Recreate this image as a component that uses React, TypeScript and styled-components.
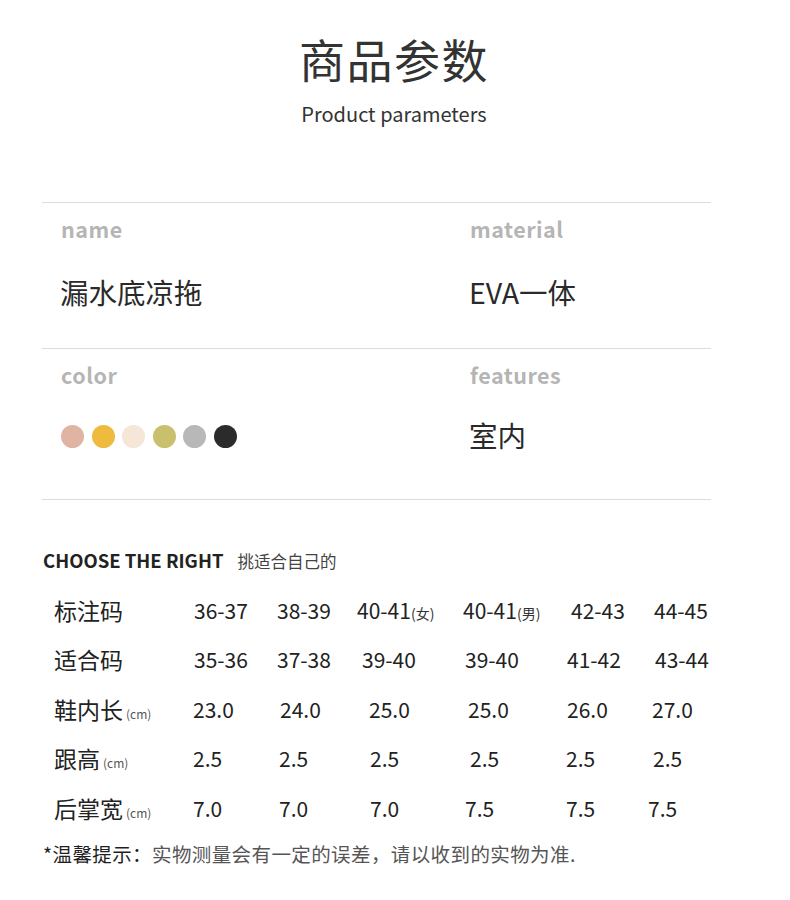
import React from "react";
import styled, { createGlobalStyle } from "styled-components";

const GlobalStyle = createGlobalStyle`
  body {
    margin: 0;
    background: #ffffff;
    font-family: "Noto Sans CJK SC", "Noto Sans", sans-serif;
  }
`;

const Page = styled.div`
  width: 790px;
  height: 900px;
  background: #fff;
  overflow: hidden;
`;

const Header = styled.header`
  display: flex;
  flex-direction: column;
  align-items: center;
  padding-top: 30px;
  margin-left: -2px;
`;

const Title = styled.h1`
  margin: 0;
  font-size: 46px;
  line-height: 56px;
  font-weight: 400;
  letter-spacing: 1.5px;
  color: #333;
`;

const Subtitle = styled.div`
  margin-top: 14px;
  font-size: 20px;
  line-height: 28px;
  color: #333;
`;

const Params = styled.section`
  margin: 74px 0 0 42px;
  width: 669px;
  border-top: 1px solid #dcdcdc;
`;

const ParamRow = styled.div<{ $h: number }>`
  display: grid;
  grid-template-columns: 428px 1fr;
  height: ${(p) => p.$h}px;
  box-sizing: border-box;
  border-bottom: 1px solid #dcdcdc;
`;

const ParamCell = styled.div<{ $left?: boolean }>`
  display: flex;
  flex-direction: column;
  padding: 12px 0 0 ${(p) => (p.$left ? 19 : 0)}px;
`;

const ParamLabel = styled.div`
  font-size: 21.5px;
  line-height: 28px;
  font-weight: 700;
  color: #b5b5b5;
  letter-spacing: 0.5px;
`;

const ParamValue = styled.div<{ $dy?: number }>`
  margin-top: ${(p) => 30 + (p.$dy ?? 0)}px;
  height: 36px;
  display: flex;
  align-items: center;
  font-size: 28.5px;
  color: #2a2a2a;
  margin-left: -1px;
`;

const Swatches = styled.div`
  display: flex;
  gap: 7.5px;
  margin-left: 1px;
  margin-top: -2px;
`;

const Swatch = styled.span<{ $c: string }>`
  width: 23px;
  height: 23px;
  border-radius: 50%;
  background: ${(p) => p.$c};
`;

const ChooseHead = styled.div`
  margin: 48px 0 0 43px;
  display: flex;
  align-items: baseline;
  gap: 14px;
  line-height: 24px;
`;

const ChooseTitle = styled.span`
  font-size: 18.5px;
  font-weight: 700;
  color: #222;
`;

const ChooseSub = styled.span`
  font-size: 16.5px;
  color: #444;
`;

const SizeTable = styled.div`
  margin: 12px 0 0 54px;
  display: grid;
  grid-template-columns: 139px 85px 87px 101px 101px 85px 1fr;
  grid-auto-rows: 49.5px;
  align-items: center;
`;

const RowLabel = styled.div`
  font-size: 23px;
  color: #222;
  white-space: nowrap;
`;

const Unit = styled.small`
  font-size: 12px;
  color: #555;
  margin-left: 3px;
`;

const Cell = styled.div<{ $dx: number }>`
  font-size: 21px;
  color: #222;
  white-space: nowrap;
  transform: translateX(${(p) => p.$dx}px);
`;

const Gender = styled.small`
  font-size: 14px;
  color: #333;
`;

const Note = styled.p`
  margin: 8px 0 0 43px;
  font-size: 19.5px;
  line-height: 26px;
  letter-spacing: 0.4px;
  color: #555;
`;

const NoteLead = styled.span`
  color: #1f1f1f;
  font-weight: 400;
`;

const swatchColors = ["#e0b4a2", "#efbb3e", "#f5e6d8", "#c9c06e", "#b9b8b9", "#2b2b2b"];

type SizeRow = {
  label: string;
  unit?: boolean;
  cells: React.ReactNode[];
  dx: number[];
};

const rows: SizeRow[] = [
  {
    label: "标注码",
    cells: [
      "36-37",
      "38-39",
      <>40-41<Gender>(女)</Gender></>,
      <>40-41<Gender>(男)</Gender></>,
      "42-43",
      "44-45",
    ],
    dx: [1, -1, -8, -3, 4, 2],
  },
  {
    label: "适合码",
    cells: ["35-36", "37-38", "39-40", "39-40", "41-42", "43-44"],
    dx: [1, -1, -3, -1, 0, 3],
  },
  {
    label: "鞋内长",
    unit: true,
    cells: ["23.0", "24.0", "25.0", "25.0", "26.0", "27.0"],
    dx: [0, 2, 4, 2, 0, 0],
  },
  {
    label: "跟高",
    unit: true,
    cells: ["2.5", "2.5", "2.5", "2.5", "2.5", "2.5"],
    dx: [0, 1, 5, 4, -1, 1],
  },
  {
    label: "后掌宽",
    unit: true,
    cells: ["7.0", "7.0", "7.0", "7.5", "7.5", "7.5"],
    dx: [0, 1, 5, -1, -1, -4],
  },
];

export default function App() {
  return (
    <Page>
      <GlobalStyle />
      <Header>
        <Title>商品参数</Title>
        <Subtitle>Product parameters</Subtitle>
      </Header>

      <Params>
        <ParamRow $h={146}>
          <ParamCell $left>
            <ParamLabel>name</ParamLabel>
            <ParamValue>漏水底凉拖</ParamValue>
          </ParamCell>
          <ParamCell>
            <ParamLabel>material</ParamLabel>
            <ParamValue>EVA一体</ParamValue>
          </ParamCell>
        </ParamRow>
        <ParamRow $h={151}>
          <ParamCell $left>
            <ParamLabel>color</ParamLabel>
            <ParamValue>
              <Swatches>
                {swatchColors.map((c) => (
                  <Swatch key={c} $c={c} />
                ))}
              </Swatches>
            </ParamValue>
          </ParamCell>
          <ParamCell>
            <ParamLabel>features</ParamLabel>
            <ParamValue $dy={-3}>室内</ParamValue>
          </ParamCell>
        </ParamRow>
      </Params>

      <ChooseHead>
        <ChooseTitle>CHOOSE THE RIGHT</ChooseTitle>
        <ChooseSub>挑适合自己的</ChooseSub>
      </ChooseHead>

      <SizeTable>
        {rows.map((r) => (
          <React.Fragment key={r.label}>
            <RowLabel>
              {r.label}
              {r.unit && <Unit>(cm)</Unit>}
            </RowLabel>
            {r.cells.map((c, i) => (
              <Cell key={i} $dx={r.dx[i]}>
                {c}
              </Cell>
            ))}
          </React.Fragment>
        ))}
      </SizeTable>

      <Note>
        <NoteLead>*温馨提示：</NoteLead>实物测量会有一定的误差，请以收到的实物为准.
      </Note>
    </Page>
  );
}
